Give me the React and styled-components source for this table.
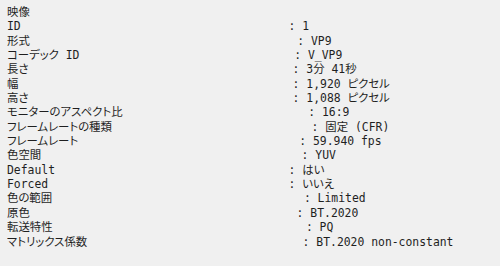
import React from "react";
import styled, { createGlobalStyle } from "styled-components";

const Global = createGlobalStyle`
  html, body {
    margin: 0;
    padding: 0;
    background: #f0f0f0;
  }
  body {
    width: 500px;
    height: 266px;
    overflow: hidden;
  }
`;

const Panel = styled.div`
  box-sizing: border-box;
  width: 500px;
  height: 266px;
  padding: 5px 0 0 7px;
  background: #f0f0f0;
  color: #1f1f1f;
  font-family: "DejaVu Sans Mono", "Noto Sans CJK JP", monospace;
  font-size: 11.4px;
  line-height: 14.35px;
  font-feature-settings: "palt";
  display: flex;
  flex-direction: column;
`;

const Heading = styled.div`
  height: 14.35px;
  white-space: pre;
`;

const Row = styled.div`
  display: grid;
  grid-template-columns: ${(p) => p.$tab}px auto;
  height: 14.35px;
  white-space: pre;
`;

const Label = styled.span`
  overflow: hidden;
`;

const Value = styled.span``;

const rows = [
  ["ID", "1", 281.6],
  ["形式", "VP9", 290.3],
  ["コーデック ID", "V_VP9", 287.3],
  ["長さ", "3分 41秒", 285.6],
  ["幅", "1,920 ピクセル", 285.6],
  ["高さ", "1,088 ピクセル", 285.6],
  ["モニターのアスペクト比", "16:9", 301.3],
  ["フレームレートの種類", "固定 (CFR)", 304.6],
  ["フレームレート", "59.940 fps", 292.3],
  ["色空間", "YUV", 294.6],
  ["Default", "はい", 281.6],
  ["Forced", "いいえ", 281.6],
  ["色の範囲", "Limited", 296.9],
  ["原色", "BT.2020", 289.6],
  ["転送特性", "PQ", 298.9],
  ["マトリックス係数", "BT.2020 non-constant", 295.6],
];

export default function App() {
  return (
    <>
      <Global />
      <Panel>
        <Heading>映像</Heading>
        {rows.map(([label, value, tab]) => (
          <Row key={label} $tab={tab}>
            <Label>{label}</Label>
            <Value>{`: ${value}`}</Value>
          </Row>
        ))}
      </Panel>
    </>
  );
}
